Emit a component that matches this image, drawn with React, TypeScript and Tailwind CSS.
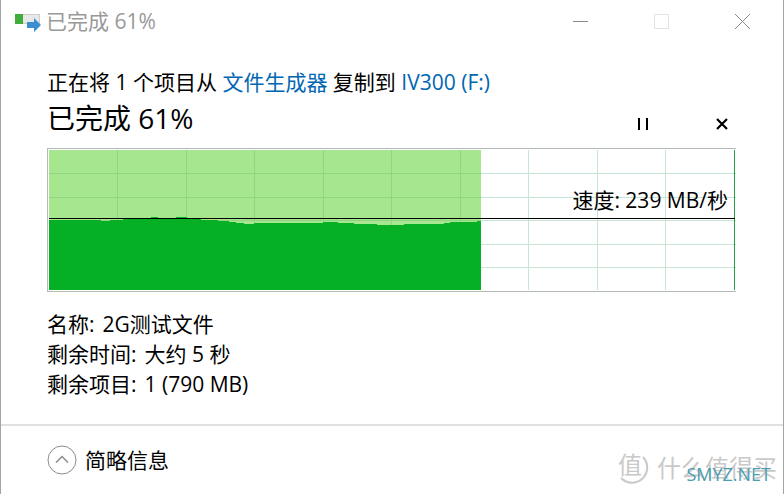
import type { ReactNode } from 'react';

const details = [
  { label: '名称:', value: '2G测试文件' },
  { label: '剩余时间:', value: '大约 5 秒' },
  { label: '剩余项目:', value: '1 (790 MB)' },
];

const columns = [68, 137, 205, 274, 342, 411, 479, 548, 616];
const rows = [23, 47, 70, 94, 117];

// speed samples as [x, y], y measured down from the top of the graph
const samples = [
  [0, 70], [48, 70], [56, 71], [66, 70], [82, 69], [100, 69], [103, 67], [108, 67], [112, 69], [124, 69], [128, 67],
  [136, 67], [142, 69], [162, 70], [176, 71], [190, 73], [200, 74], [210, 73], [272, 73], [276, 72],
  [286, 72], [292, 73], [318, 74], [338, 75], [350, 75], [360, 74], [392, 74], [404, 72], [424, 72], [432, 71],
];

function CopyIcon() {
  return (
    <svg width="28" height="22" viewBox="0 0 28 22" aria-hidden="true">
      <rect x="1.5" y="4.5" width="24" height="9" fill="#e6e8ea" stroke="#d3cfc4" />
      <rect x="1" y="4" width="8" height="10" fill="#3fae3a" />
      <path d="M13 12h7V8l7 7-7 7v-4h-7z" fill="#3a8fd0" />
    </svg>
  );
}

function WindowButton({ label, children }: { label: string; children: ReactNode }) {
  return (
    <button type="button" aria-label={label} className="flex w-[81px] items-center justify-center">
      <svg width="17" height="17" viewBox="0 0 17 17" fill="none" aria-hidden="true">
        {children}
      </svg>
    </button>
  );
}

function SpeedGraph() {
  const area = `M0 140 L${samples.map(([x, y]) => `${x} ${y}`).join(' L')} L432 140 Z`;

  return (
    <div className="relative mt-2 border border-r-0 border-[#b4bab7] py-px pl-px">
      <svg
        className="block h-[140px] w-full"
        viewBox="0 0 687 140"
        preserveAspectRatio="none"
        shapeRendering="crispEdges"
        aria-hidden="true"
      >
        {columns.map((x) => (
          <rect key={x} x={x} y="0" width="1" height="140" fill="#c6e6d4" />
        ))}
        {rows.map((y) => (
          <rect key={y} x="0" y={y} width="687" height="1" fill="#c6e6d4" />
        ))}
        <rect x="0" y="0" width="432" height="140" fill="#a6e68f" />
        {columns.filter((x) => x < 432).map((x) => (
          <rect key={x} x={x} y="0" width="1" height="140" fill="#8fd583" />
        ))}
        {rows.map((y) => (
          <rect key={y} x="0" y={y} width="432" height="1" fill="#8fd583" />
        ))}
        <path d={area} fill="#06b025" />
        <rect x="685" y="0" width="1" height="140" fill="#22a040" />
        <rect x="0" y="68" width="686" height="1" fill="#000" />
      </svg>
      <p className="absolute top-9 right-2 leading-[30px]">速度: 239 MB/秒</p>
    </div>
  );
}

function Watermark() {
  return (
    <div className="absolute right-1.5 bottom-2 flex items-center gap-1.5 text-[#c9c9c9]">
      <div className="relative flex size-9 items-center justify-center pr-1.5 pb-1.5">
        <svg className="absolute inset-0" width="36" height="36" viewBox="0 0 36 36" fill="none" aria-hidden="true">
          <path d="M28 7a15 15 0 0 1-22 21" stroke="#c9c9c9" strokeWidth="2" />
        </svg>
        <span className="text-[24px] leading-none">值</span>
      </div>
      <span className="text-[24px] leading-9">什么值得买</span>
      <span className="absolute right-1.5 bottom-0 text-[18px] leading-6 font-medium text-[#4d9dae]">SMYZ.NET</span>
    </div>
  );
}

export default function App() {
  return (
    <main className="flex min-h-screen flex-col border-x border-[#a3a3a3] bg-white font-['Open_Sans','Noto_Sans_CJK_SC',sans-serif] text-[21px] text-black">
      <header className="flex h-[42px] justify-between text-[#999]">
        <div className="flex items-center gap-1 pl-[13px]">
          <CopyIcon />
          <h1 className="leading-[30px]">已完成 61%</h1>
        </div>
        <div className="flex">
          <WindowButton label="最小化">
            <path d="M1 8.500h15" stroke="#8a8a8a" />
          </WindowButton>
          <WindowButton label="最大化">
            <path d="M1.500 1.500h14v14h-14z" stroke="#e2e2e2" />
          </WindowButton>
          <WindowButton label="关闭">
            <path d="M1 1l15 15M16 1L1 16" stroke="#8a8a8a" />
          </WindowButton>
        </div>
      </header>

      <section className="grow pt-[25px] pr-[47px] pb-6 pl-[46px]">
        <p className="leading-[30px]">
          正在将 1 个项目从{' '}
          <a href="#source" className="text-[#0066b4]">文件生成器</a>
          {' '}复制到{' '}
          <a href="#target" className="text-[#0066b4]">IV300 (F:)</a>
        </p>
        <div className="flex items-center justify-between">
          <h2 className="text-[28px] leading-[43px]">已完成 61%</h2>
          <div className="flex gap-[51px] pt-2.5">
            <button type="button" aria-label="暂停" className="flex size-7 items-center justify-center">
              <svg width="12" height="12" viewBox="0 0 12 12" aria-hidden="true">
                <path d="M1 0h2v12H1zM9 0h2v12H9z" />
              </svg>
            </button>
            <button type="button" aria-label="取消" className="flex size-7 items-center justify-center">
              <svg width="12" height="12" viewBox="0 0 12 12" fill="none" stroke="#000" strokeWidth="2.2" aria-hidden="true">
                <path d="M1 1l10 10M11 1L1 11" />
              </svg>
            </button>
          </div>
        </div>

        <SpeedGraph />

        <dl className="mt-[17px] leading-[30px]">
          {details.map((item) => (
            <div key={item.label} className="flex gap-2">
              <dt>{item.label}</dt>
              <dd>{item.value}</dd>
            </div>
          ))}
        </dl>
      </section>

      <footer className="relative flex h-[70px] items-center border-t-2 border-[#e0e0e0] pl-[46px]">
        <button type="button" className="flex items-center gap-2">
          <svg width="30" height="30" viewBox="0 0 30 30" fill="none" aria-hidden="true">
            <circle cx="15" cy="15" r="14" stroke="#8c8c8c" />
            <path d="M9 17.500l6-6 6 6" stroke="#8c8c8c" strokeWidth="1.500" />
          </svg>
          <span className="leading-[30px]">简略信息</span>
        </button>
        <Watermark />
      </footer>
    </main>
  );
}
